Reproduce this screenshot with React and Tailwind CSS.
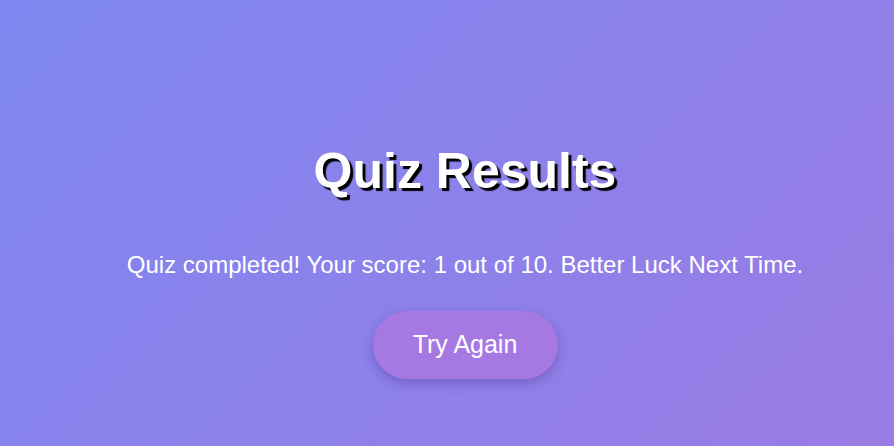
export default function App() {
  return (
    <div
      className="min-h-screen w-full bg-[linear-gradient(135deg,#7e88f0,#9a7be4)] text-white"
      style={{ fontFamily: '"Liberation Sans", Arial, sans-serif' }}
    >
      <div className="flex flex-col items-center pt-[142px] pl-[36px]">
        <h1 className="text-[50px] font-bold leading-[58px] [text-shadow:3px_3px_1px_#000]">
          Quiz Results
        </h1>
        <p className="mt-[51px] text-[24px] leading-[28px]">
          Quiz completed! Your score: 1 out of 10. Better Luck Next Time.
        </p>
        <button className="mt-[32px] h-[68px] w-[185px] rounded-full bg-[#a678e2] text-[25px] text-white shadow-[0_4px_12px_rgba(60,40,140,0.35)]">
          Try Again
        </button>
      </div>
    </div>
  );
}
